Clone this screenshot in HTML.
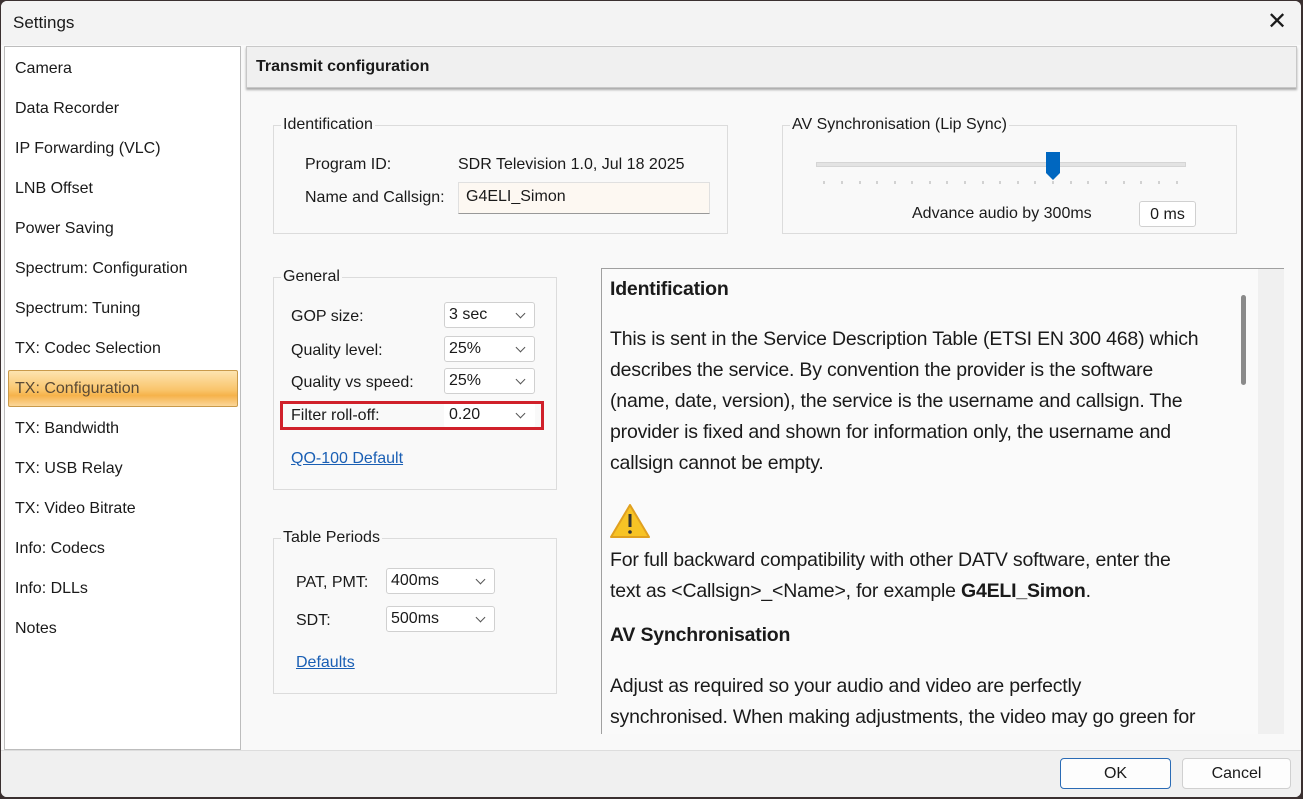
<!DOCTYPE html>
<html><head><meta charset="utf-8"><style>
*{margin:0;padding:0;box-sizing:border-box}
body{width:1303px;height:799px;overflow:hidden;background:#3a3030;font-family:"Liberation Sans",sans-serif;color:#1a1a1a;position:relative}
.win{position:absolute;left:1px;top:1px;width:1300px;height:796px;background:#f9f9f9;border-radius:6px;overflow:hidden}
.a{position:absolute;white-space:nowrap}
.t16{font-size:16px}
.grp{position:absolute;border:1px solid #dcdcdc}
.lg{position:absolute;top:-10px;left:7px;background:#f9f9f9;padding:0 2px;font-size:16px}
.cb{position:absolute;background:#fff;border:1px solid #d0d0d0;border-radius:3px;font-size:16px;padding:3px 0 0 4px;height:26px}
.cb:after{content:"";position:absolute;right:10px;top:7px;width:6px;height:6px;border-right:1px solid #555;border-bottom:1px solid #555;transform:rotate(45deg)}
.help{font-size:19.5px;line-height:31px;letter-spacing:-0.2px}
.btn{position:absolute;background:#fdfdfd;border:1px solid #d0d0d0;border-radius:4px;font-size:16px;text-align:center;line-height:29px}
</style></head><body><div class="win">
<div class="a" style="left:0;top:0;width:1300px;height:44px;background:#f3f3f3"></div>
<div class="a" style="left:12px;top:12px;font-size:17px">Settings</div>
<div class="a" style="left:1266px;top:6px;font-size:24px;font-weight:300">✕</div>
<div class="a" style="left:3px;top:45px;width:237px;height:704px;background:#fff;border:1px solid #bdbdbd"></div>
<div class="a" style="left:7px;top:369px;width:230px;height:37px;border:1px solid #c99a4a;border-radius:2px;background:linear-gradient(#fde4b0,#f9c46a 55%,#f6b24a 70%,#fbd79a)"></div>
<div class="a t16" style="left:14px;top:48px;line-height:40px">Camera<br>Data Recorder<br>IP Forwarding (VLC)<br>LNB Offset<br>Power Saving<br>Spectrum: Configuration<br>Spectrum: Tuning<br>TX: Codec Selection<br><span style="color:#5a4a35">TX: Configuration</span><br>TX: Bandwidth<br>TX: USB Relay<br>TX: Video Bitrate<br>Info: Codecs<br>Info: DLLs<br>Notes</div>
<div class="a" style="left:245px;top:45px;width:1051px;height:42px;background:#f0f0f0;border:1px solid #c8c8c8;box-shadow:0 2px 2px #aaa"></div>
<div class="a" style="left:255px;top:57px;font-size:16px;font-weight:bold">Transmit configuration</div>

<div class="grp" style="left:272px;top:124px;width:455px;height:109px"><div class="lg">Identification</div></div>
<div class="a t16" style="left:304px;top:155px">Program ID:</div>
<div class="a t16" style="left:457px;top:155px">SDR Television 1.0, Jul 18 2025</div>
<div class="a t16" style="left:304px;top:188px">Name and Callsign:</div>
<div class="a" style="left:457px;top:181px;width:252px;height:32px;background:#fdf8f2;border:1px solid #e0e0e0;border-bottom-color:#999"></div>
<div class="a t16" style="left:465px;top:187px">G4ELI_Simon</div>

<div class="grp" style="left:781px;top:124px;width:455px;height:109px"><div class="lg">AV Synchronisation (Lip Sync)</div></div>
<div class="a" style="left:815px;top:161px;width:370px;height:5px;background:#e3e3e3;border:1px solid #d5d5d5"></div>
<svg class="a" style="left:815px;top:150px" width="380" height="35"><path d="M230 1h14v21l-7 7-7-7z" fill="#0067c0"/><g stroke="#aaa"><path d="M8 30v3M26 30v3M44 30v3M61 30v3M79 30v3M96 30v3M114 30v3M131 30v3M149 30v3M167 30v3M184 30v3M202 30v3M219 30v3M237 30v3M255 30v3M272 30v3M290 30v3M308 30v3M325 30v3M343 30v3M361 30v3"/></g></svg>
<div class="a t16" style="left:911px;top:204px">Advance audio by 300ms</div>
<div class="a" style="left:1138px;top:200px;width:57px;height:26px;background:#fff;border:1px solid #d0d0d0;border-radius:3px;font-size:16px;text-align:center;line-height:25px">0 ms</div>

<div class="grp" style="left:272px;top:276px;width:284px;height:213px"><div class="lg">General</div></div>
<div class="a t16" style="left:290px;top:307px">GOP size:</div><div class="cb" style="left:443px;top:301px;width:91px">3 sec</div>
<div class="a t16" style="left:290px;top:341px">Quality level:</div><div class="cb" style="left:443px;top:335px;width:91px">25%</div>
<div class="a t16" style="left:290px;top:373px">Quality vs speed:</div><div class="cb" style="left:443px;top:367px;width:91px">25%</div>
<div class="a t16" style="left:290px;top:406px">Filter roll-off:</div><div class="cb" style="left:443px;top:401px;width:91px;border-color:#fff">0.20</div>
<div class="a" style="left:279px;top:400px;width:264px;height:29px;border:3px solid #d0202a"></div>
<div class="a t16" style="left:290px;top:449px;color:#1a5fb4;text-decoration:underline">QO-100 Default</div>

<div class="grp" style="left:272px;top:537px;width:284px;height:156px"><div class="lg">Table Periods</div></div>
<div class="a t16" style="left:295px;top:573px">PAT, PMT:</div><div class="cb" style="left:385px;top:567px;width:109px">400ms</div>
<div class="a t16" style="left:295px;top:611px">SDT:</div><div class="cb" style="left:385px;top:605px;width:109px">500ms</div>
<div class="a t16" style="left:295px;top:653px;color:#1a5fb4;text-decoration:underline">Defaults</div>

<div class="a" style="left:600px;top:267px;width:683px;height:466px;background:#fafafa;border-top:1px solid #a0a0a0;border-left:1px solid #a0a0a0"></div>
<div class="a" style="left:1257px;top:268px;width:26px;height:465px;background:#f0f0f0"></div>
<div class="a" style="left:1240px;top:294px;width:5px;height:90px;background:#8a8a8a;border-radius:3px"></div>
<div class="a help" style="left:609px;top:273px;font-weight:bold">Identification</div>
<div class="a help" style="left:609px;top:323px">This is sent in the Service Description Table (ETSI EN 300 468) which<br>describes the service. By convention the provider is the software<br>(name, date, version), the service is the username and callsign. The<br>provider is fixed and shown for information only, the username and<br>callsign cannot be empty.</div>
<svg class="a" style="left:608px;top:502px" width="42" height="36"><path d="M21 2L40 34H2z" fill="#f7c325" stroke="#e0a020" stroke-width="2" stroke-linejoin="round"/><path d="M21 11v13" stroke="#333" stroke-width="3"/><circle cx="21" cy="29" r="1.8" fill="#333"/></svg>
<div class="a help" style="left:609px;top:544px">For full backward compatibility with other DATV software, enter the<br>text as &lt;Callsign&gt;_&lt;Name&gt;, for example <b>G4ELI_Simon</b>.</div>
<div class="a help" style="left:609px;top:619px;font-weight:bold">AV Synchronisation</div>
<div class="a help" style="left:609px;top:670px">Adjust as required so your audio and video are perfectly<br>synchronised. When making adjustments, the video may go green for</div>

<div class="a" style="left:0;top:749px;width:1300px;height:47px;background:#f0f0f0;border-top:1px solid #ddd"></div>
<div class="btn" style="left:1059px;top:757px;width:111px;height:31px;border-color:#2a6bb5">OK</div>
<div class="btn" style="left:1181px;top:757px;width:109px;height:31px">Cancel</div>
</div></body></html>
